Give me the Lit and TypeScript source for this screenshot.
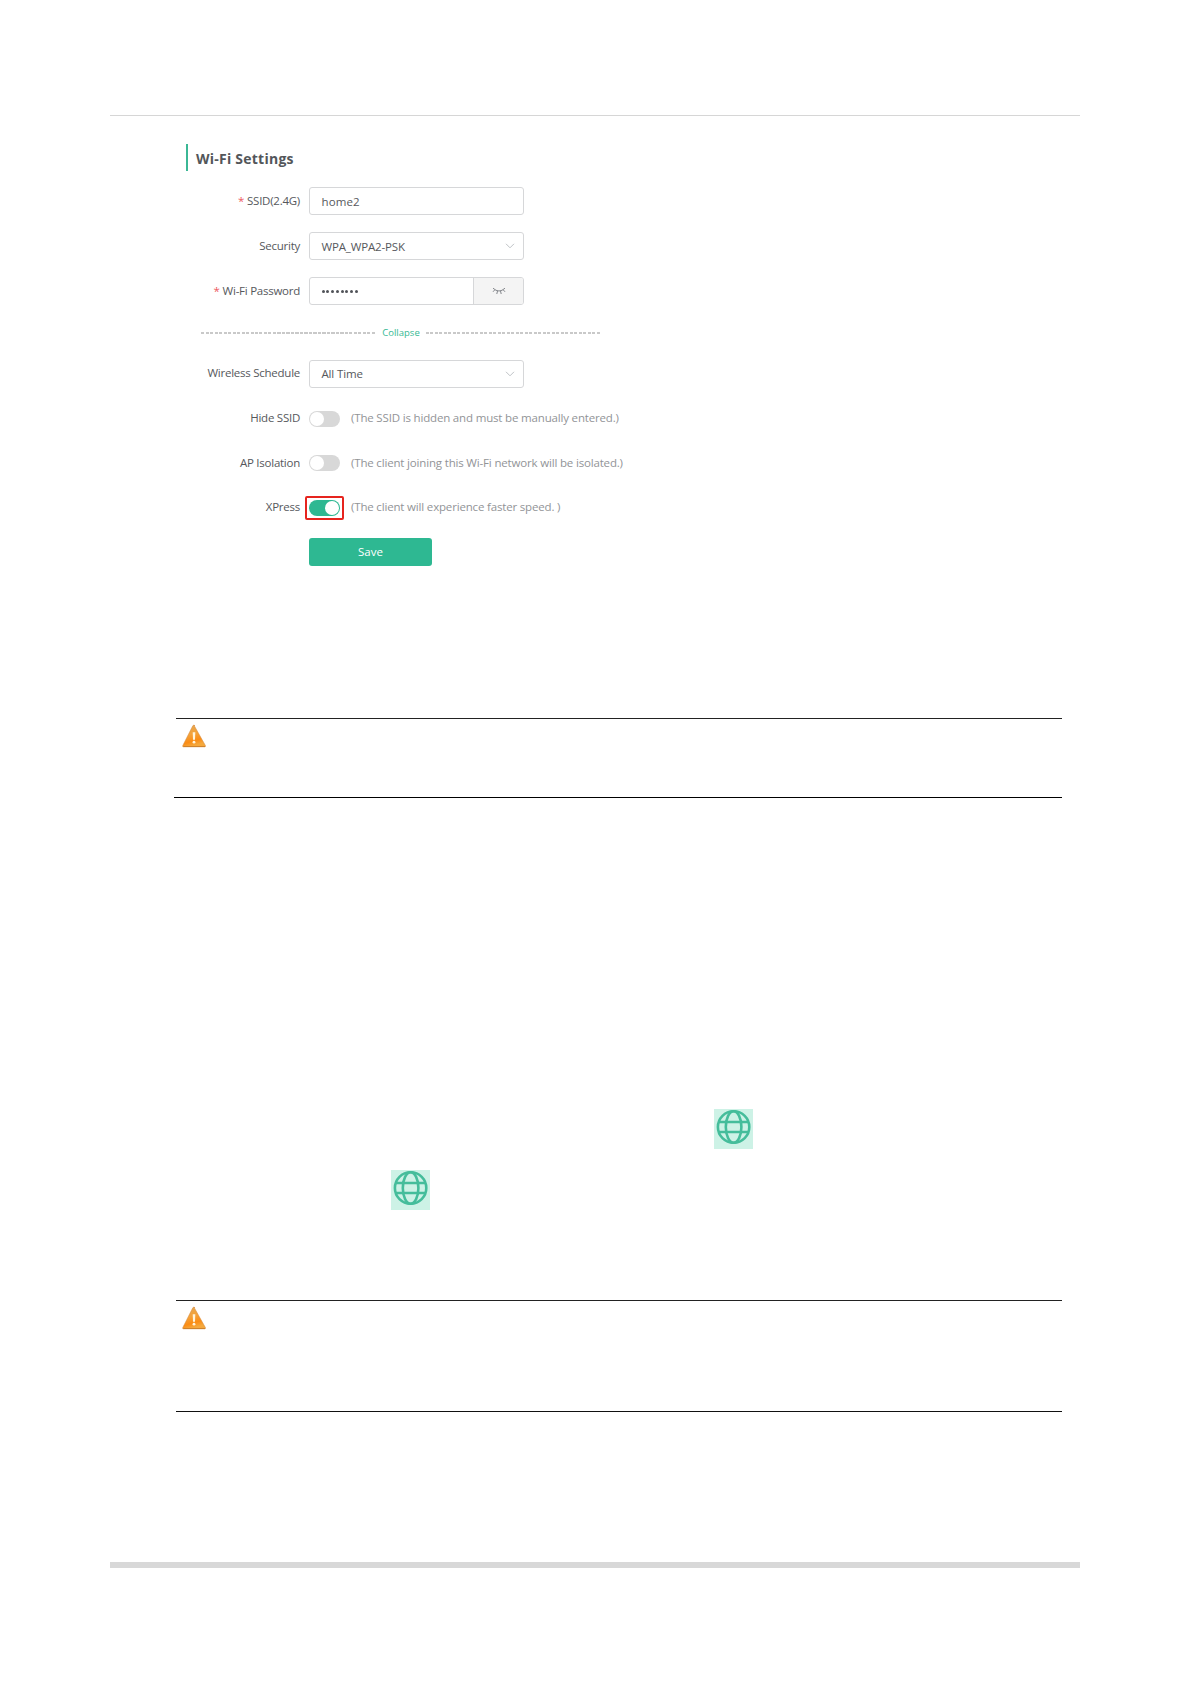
import { LitElement, html, css } from "lit";
import { customElement, property } from "lit/decorators.js";

@customElement("warning-icon")
class WarningIcon extends LitElement {
  static styles = css`
    :host { display: block; width: 24px; height: 24px; }
    svg { display: block; }
  `;
  render() {
    return html`<svg width="24" height="24" viewBox="0 0 24 24">
      <defs>
        <linearGradient id="g" x1="0" y1="0" x2="0.3" y2="1">
          <stop offset="0" stop-color="#e3a650" />
          <stop offset="0.5" stop-color="#f4a23a" />
          <stop offset="0.8" stop-color="#fb8c14" />
          <stop offset="1" stop-color="#f5a83c" />
        </linearGradient>
      </defs>
      <path d="M12 1.3 L23.4 21.6 Q23.9 22.8 22.8 22.8 H1.4 Q.3 22.8 .8 21.6 L10.8 1.8 Q12 .2 13 1.8Z" fill="url(#g)" stroke="#d9924a" stroke-width=".6" />
      <path d="M1.3 22.5H23" stroke="#c87820" stroke-width=".8" />
      <path d="M10.7 8.3h2.6l-.3 7.4h-2z" fill="#fff4dc" />
      <circle cx="12" cy="18.2" r="1.4" fill="#fff4dc" />
    </svg>`;
  }
}

@customElement("globe-icon")
class GlobeIcon extends LitElement {
  static styles = css`
    :host { display: block; width: 39px; height: 40px; background: #cdf2e6; }
    svg { display: block; }
  `;
  render() {
    return html`<svg width="39" height="39" viewBox="0 0 39 39" fill="none" stroke="#45bd9b" stroke-width="2.6">
      <circle cx="19.6" cy="18" r="15.7" />
      <ellipse cx="19.6" cy="18" rx="7.8" ry="15.7" />
      <path d="M5 13H34.2M5 23H34.2" />
    </svg>`;
  }
}

@customElement("toggle-switch")
class ToggleSwitch extends LitElement {
  @property({ type: Boolean, reflect: true }) on = false;
  static styles = css`
    :host { display: block; }
    .track { box-sizing: border-box; width: 31px; height: 16px; border-radius: 8px; background: #d8d8d8; padding: 1px; display: flex; }
    .knob { width: 14px; height: 14px; border-radius: 50%; background: #fff; }
    :host([on]) .track { background: #2eb892; justify-content: flex-end; }
  `;
  render() {
    return html`<div class="track"><span class="knob"></span></div>`;
  }
}

@customElement("app-root")
class AppRoot extends LitElement {
  static styles = css`
    :host { display: block; font-family: "Open Sans", "Noto Sans", sans-serif; font-size: 11.5px; color: #56585c; }
    .page { box-sizing: border-box; width: 1191px; height: 1684px; background: #fff; padding: 115px 111px 0 110px; overflow: hidden; }
    .top { height: 1px; background: #d6d6d6; }
    .form { padding: 28px 0 0 76px; height: 602px; box-sizing: border-box; }
    .title { display: flex; align-items: center; height: 27px; border-left: 2px solid #3bb795; padding: 2px 0 0 8px; box-sizing: border-box; margin-bottom: 16px; font-size: 14px; font-weight: 700; letter-spacing: 0.24px; color: #53565a; }
    .row { display: grid; grid-template-columns: 114px auto; column-gap: 9px; align-items: center; height: 28px; margin-bottom: 17px; }
    .row.tight { margin-bottom: 16.5px; }
    .label { text-align: right; white-space: nowrap; line-height: 26px; padding-bottom: 1px; letter-spacing: -0.25px; }
    .label.raised { padding-bottom: 3px; }
    .req { color: #ed5a62; margin-right: 3px; }
    .field { box-sizing: border-box; width: 215px; height: 28px; border: 1px solid #d6d7d9; border-radius: 3px; padding: 0 8px 0 11.5px; display: flex; align-items: center; justify-content: space-between; letter-spacing: -0.15px; }
    .field.plain { letter-spacing: 0.1px; }
    .field.raised { padding-bottom: 1px; }
    .field.group { padding-right: 0; }
    .eye { width: 49px; height: 26px; background: #f4f4f4; border-left: 1px solid #d6d7d9; display: flex; align-items: center; justify-content: center; border-radius: 0 2px 2px 0; }
    .dots { display: flex; gap: 1.8px; }
    .dots i { width: 3px; height: 3px; border-radius: 50%; background: #505358; }
    .divider { display: flex; align-items: center; width: 400px; height: 20px; margin: 18px 0 16.5px 15px; color: #35b993; font-size: 9.5px; }
    .dash { height: 2px; background: repeating-linear-gradient(90deg, #c9c9c9 0 3px, transparent 3px 4.5px); }
    .left { width: 174px; }
    .right { width: 175px; }
    .mid { flex: 1; text-align: center; padding: 0 0 1px 1px; }
    .switch { display: flex; align-items: center; }
    .note { color: #929497; margin-left: 11px; white-space: nowrap; padding-bottom: 2px; letter-spacing: -0.17px; }
    .mark { box-sizing: border-box; width: 39px; height: 24px; border: 2px solid #e6241e; border-radius: 2px; margin: 0 -4px; display: flex; align-items: center; justify-content: center; }
    .save { width: 123px; height: 28px; border: 0; border-radius: 3px; background: #2eb892; color: #fff; font: inherit; padding: 0 0 1px; }
    .notice { box-sizing: border-box; margin: 0 18px 0 66px; border-top: 1px solid #222; border-bottom: 1px solid #111; padding: 5px 0 0 6px; }
    .notice.first { border-bottom: 0; height: 79px; }
    .notice.second { height: 112px; }
    .rule { height: 1px; background: #000; margin: 0 18px 0 64px; }
    .globes { height: 502px; box-sizing: border-box; padding-top: 311px; }
    .g1 { margin-left: 604px; margin-bottom: 21px; }
    .g2 { margin-left: 281px; }
    .foot { height: 6px; background: #d8d8d8; margin-top: 150px; }
  `;

  chevron() {
    return html`<svg width="10" height="6" viewBox="0 0 10 6" fill="none" stroke="#bfc2c6"><path d="M1 .8 5 4.8 9 .8" /></svg>`;
  }

  toggle(label: string, note: string, on = false) {
    const control = html`<toggle-switch ?on=${on}></toggle-switch>`;
    return html`<div class="row tight">
      <div class="label">${label}</div>
      <div class="switch">${on ? html`<div class="mark">${control}</div>` : control}<span class="note">${note}</span></div>
    </div>`;
  }

  render() {
    return html`<div class="page">
      <div class="top"></div>
      <div class="form">
        <div class="title">Wi-Fi Settings</div>
        <div class="row">
          <div class="label"><span class="req">*</span>SSID(2.4G)</div>
          <div class="field plain">home2</div>
        </div>
        <div class="row">
          <div class="label">Security</div>
          <div class="field">WPA_WPA2-PSK${this.chevron()}</div>
        </div>
        <div class="row">
          <div class="label"><span class="req">*</span>Wi-Fi Password</div>
          <div class="field group">
            <span class="dots">${Array.from({ length: 8 }, () => html`<i></i>`)}</span>
            <span class="eye"><svg width="14" height="8" viewBox="0 0 14 8" fill="none" stroke="#84878c"><path d="M1 1.2Q7 6.8 13 1.2M2.8 2.8 1 4.8M5.5 4 4.8 7M8.5 4 9.2 7M11.2 2.8 13 4.8" /></svg></span>
          </div>
        </div>
        <div class="divider"><span class="dash left"></span><span class="mid">Collapse</span><span class="dash right"></span></div>
        <div class="row">
          <div class="label raised">Wireless Schedule</div>
          <div class="field raised">All Time${this.chevron()}</div>
        </div>
        ${this.toggle("Hide SSID", "(The SSID is hidden and must be manually entered.)")}
        ${this.toggle("AP Isolation", "(The client joining this Wi-Fi network will be isolated.)")}
        ${this.toggle("XPress", "(The client will experience faster speed. )", true)}
        <div class="row"><span></span><button class="save">Save</button></div>
      </div>
      <div class="notice first"><warning-icon></warning-icon></div>
      <div class="rule"></div>
      <div class="globes"><globe-icon class="g1"></globe-icon><globe-icon class="g2"></globe-icon></div>
      <div class="notice second"><warning-icon></warning-icon></div>
      <div class="foot"></div>
    </div>`;
  }
}
